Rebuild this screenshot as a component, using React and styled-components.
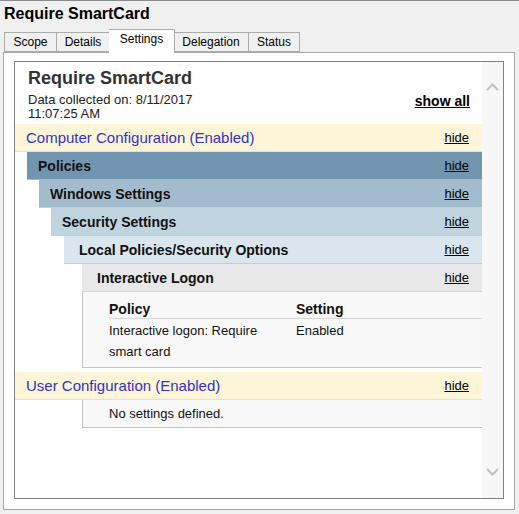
import React from 'react';
import styled, { createGlobalStyle } from 'styled-components';

const GlobalStyle = createGlobalStyle`
  html, body {
    margin: 0;
    padding: 0;
    background: #f0f0f0;
    font-family: "Liberation Sans", Arial, sans-serif;
  }
`;

const Window = styled.div`
  width: 519px;
  height: 514px;
  box-sizing: border-box;
  border-top: 1px solid #8a8a8a;
  background: #f0f0f0;
  display: flex;
  flex-direction: column;
`;

const Title = styled.div`
  height: 28px;
  line-height: 26px;
  padding-left: 4px;
  font-size: 16px;
  font-weight: bold;
  color: #000;
`;

const TabRow = styled.div`
  display: flex;
  align-items: flex-end;
  height: 23px;
  padding-left: 4px;
  position: relative;
  z-index: 1;
`;

const Tab = styled.div`
  box-sizing: border-box;
  width: ${p => p.w}px;
  height: ${p => (p.active ? 24 : 20)}px;
  margin-bottom: ${p => (p.active ? -1 : 0)}px;
  margin-left: ${p => (p.active ? -1 : 0)}px;
  margin-right: ${p => (p.active ? -1 : 0)}px;
  border: 1px solid #acacac;
  border-bottom: ${p => (p.active ? 'none' : '1px solid #acacac')};
  background: ${p => (p.active ? '#fff' : '#f0f0f0')};
  font-size: 12px;
  color: #000;
  text-align: center;
  line-height: ${p => (p.active ? 19 : 18)}px;
  position: relative;
  z-index: ${p => (p.active ? 2 : 1)};
  & + & {
    border-left: ${p => (p.active ? '1px solid #acacac' : 'none')};
  }
`;

const Panel = styled.div`
  box-sizing: border-box;
  height: 458px;
  margin: 0 4px 0 3px;
  border: 1px solid #a8a8a8;
  background: #fff;
  padding: 8px 10px 10px 10px;
  display: flex;
`;

const Browser = styled.div`
  flex: 1;
  border: 1px solid #828282;
  display: flex;
  background: #fff;
  overflow: hidden;
`;

const Content = styled.div`
  flex: 1;
  display: flex;
  flex-direction: column;
`;

const ScrollBar = styled.div`
  width: 21px;
  background: #f7f7f7;
  display: flex;
  flex-direction: column;
  justify-content: space-between;
  align-items: center;
  padding: 21px 0 22px;
`;

const ReportHead = styled.div`
  padding: 5px 12px 3px 13px;
`;

const ReportTitle = styled.div`
  font-size: 18px;
  font-weight: bold;
  color: #333;
  line-height: 22px;
`;

const MetaRow = styled.div`
  display: flex;
  justify-content: space-between;
  align-items: flex-start;
  margin-top: 4px;
`;

const Meta = styled.div`
  font-size: 13px;
  line-height: 14px;
  color: #222;
`;

const ShowAll = styled.a`
  font-size: 14px;
  font-weight: bold;
  color: #000;
  text-decoration: underline;
  line-height: 14px;
  margin-top: 1px;
`;

const Bar = styled.div`
  box-sizing: border-box;
  height: 28px;
  margin-left: ${p => p.indent || 0}px;
  padding: 0 13px 0 ${p => p.pad || 11}px;
  display: flex;
  align-items: center;
  justify-content: space-between;
  background: ${p => p.bg};
  border-bottom: 1px solid ${p => p.line || 'rgba(255,255,255,0.35)'};
`;

const BarLabel = styled.span`
  font-size: ${p => (p.blue ? 15 : 14)}px;
  font-weight: ${p => (p.blue ? 'normal' : 'bold')};
  color: ${p => (p.blue ? '#3232c8' : '#111')};
`;

const Hide = styled.a`
  font-size: 13px;
  color: #000;
  text-decoration: underline;
`;

const Block = styled.div`
  box-sizing: border-box;
  margin-left: 67px;
  background: #f8f8f8;
  border: 1px solid #c4c4c4;
  border-right: none;
  border-top: none;
  margin-bottom: ${p => p.gap || 0}px;
`;

const Table = styled.div`
  display: grid;
  grid-template-columns: 187px 1fr;
  margin-left: 26px;
  font-size: 13px;
  color: #111;
`;

const HeadCell = styled.div`
  font-size: 14px;
  font-weight: bold;
  line-height: 16px;
  padding: 9px 0 1px;
  border-bottom: 1px solid #d6d6d6;
`;

const Cell = styled.div`
  line-height: 21px;
  padding: 1px 20px 5px 0;
`;

const Note = styled.div`
  font-size: 13px;
  color: #111;
  line-height: 27px;
  padding-left: 26px;
`;

const Chevron = ({ up }) => (
  <svg width="13" height="8" viewBox="0 0 13 8">
    <path
      d={up ? 'M1 7 L6.5 1.5 L12 7' : 'M1 1 L6.5 6.5 L12 1'}
      fill="none"
      stroke="#c2c2c2"
      strokeWidth="2.2"
    />
  </svg>
);

const tabs = [
  { label: 'Scope', w: 53 },
  { label: 'Details', w: 53 },
  { label: 'Settings', w: 66, active: true },
  { label: 'Delegation', w: 75 },
  { label: 'Status', w: 51 },
];

const App = () => (
  <Window>
    <GlobalStyle />
    <Title>Require SmartCard</Title>
    <TabRow>
      {tabs.map(t => (
        <Tab key={t.label} w={t.w} active={t.active}>{t.label}</Tab>
      ))}
    </TabRow>
    <Panel>
      <Browser>
        <Content>
          <ReportHead>
            <ReportTitle>Require SmartCard</ReportTitle>
            <MetaRow>
              <Meta>
                Data collected on: 8/11/2017
                <br />
                11:07:25 AM
              </Meta>
              <ShowAll>show all</ShowAll>
            </MetaRow>
          </ReportHead>

          <Bar bg="#fcf5d8" line="#eae2c4">
            <BarLabel blue>Computer Configuration (Enabled)</BarLabel>
            <Hide>hide</Hide>
          </Bar>
          <Bar bg="#7396b0" indent={12}>
            <BarLabel>Policies</BarLabel>
            <Hide>hide</Hide>
          </Bar>
          <Bar bg="#a3bccd" indent={24}>
            <BarLabel>Windows Settings</BarLabel>
            <Hide>hide</Hide>
          </Bar>
          <Bar bg="#c0d4e0" indent={36} line="#c6ccd0">
            <BarLabel>Security Settings</BarLabel>
            <Hide>hide</Hide>
          </Bar>
          <Bar bg="#dae6ed" indent={49} pad={15} line="#c8cccf">
            <BarLabel>Local Policies/Security Options</BarLabel>
            <Hide>hide</Hide>
          </Bar>
          <Bar bg="#e8e8e8" indent={67} pad={15} line="#d4d4d4">
            <BarLabel>Interactive Logon</BarLabel>
            <Hide>hide</Hide>
          </Bar>
          <Block gap={4}>
            <Table>
              <HeadCell>Policy</HeadCell>
              <HeadCell>Setting</HeadCell>
              <Cell>Interactive logon: Require smart card</Cell>
              <Cell>Enabled</Cell>
            </Table>
          </Block>

          <Bar bg="#fcf5d8" line="#eae2c4">
            <BarLabel blue>User Configuration (Enabled)</BarLabel>
            <Hide>hide</Hide>
          </Bar>
          <Block>
            <Note>No settings defined.</Note>
          </Block>
        </Content>
        <ScrollBar>
          <Chevron up />
          <Chevron />
        </ScrollBar>
      </Browser>
    </Panel>
  </Window>
);

export default App;
